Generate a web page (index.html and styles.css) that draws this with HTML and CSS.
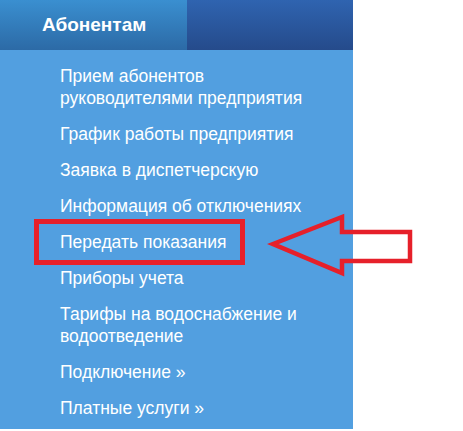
FILE: index.html
```html
<!DOCTYPE html>
<html lang="ru">
<head>
<meta charset="utf-8">
<title>Абонентам</title>
<link rel="stylesheet" href="styles.css">
</head>
<body>
<div class="page">
  <nav class="menu">
    <div class="menu-header">
      <div class="tab">Абонентам</div>
      <div class="tab-rest"></div>
    </div>
    <ul class="items">
      <li>Прием абонентов<br>руководителями предприятия</li>
      <li>График работы предприятия</li>
      <li>Заявка в диспетчерскую</li>
      <li>Информация об отключениях</li>
      <li>Передать показания</li>
      <li>Приборы учета</li>
      <li>Тарифы на водоснабжение и<br>водоотведение</li>
      <li>Подключение »</li>
      <li>Платные услуги »</li>
    </ul>
  </nav>
  <div class="highlight"></div>
  <svg class="arrow" width="463" height="431" viewBox="0 0 463 431">
    <polygon points="273,244 342,217 342,232 410,232 410,261 342,261 342,273" fill="none" stroke="#e6202a" stroke-width="4.5" stroke-linejoin="miter"/>
  </svg>
</div>
</body>
</html>
```

FILE: styles.css
```css
html, body {
  margin: 0;
  padding: 0;
  background: #ffffff;
}
.page {
  position: relative;
  width: 463px;
  height: 431px;
  overflow: hidden;
  font-family: "Liberation Sans", Arial, sans-serif;
}
.menu {
  width: 353px;
  height: 429px;
  background: #529fe0;
}
.menu-header {
  display: flex;
  height: 50px;
}
.tab {
  width: 145px;
  padding-left: 42px;
  background: linear-gradient(#3a8fd0, #2c6aa6);
  color: #ffffff;
  font-weight: bold;
  font-size: 19px;
  line-height: 50px;
}
.tab-rest {
  flex: 1;
  background: linear-gradient(#2f64b0, #254b8b);
}
.items {
  list-style: none;
  margin: 0;
  padding: 15px 0 0 60px;
}
.items li {
  color: #ffffff;
  font-size: 17.5px;
  line-height: 22px;
  padding-bottom: 14px;
  white-space: nowrap;
}
.highlight {
  position: absolute;
  left: 34px;
  top: 219px;
  width: 201px;
  height: 36px;
  border: 5px solid #e6202a;
}
.arrow {
  position: absolute;
  left: 0;
  top: 0;
}
```
